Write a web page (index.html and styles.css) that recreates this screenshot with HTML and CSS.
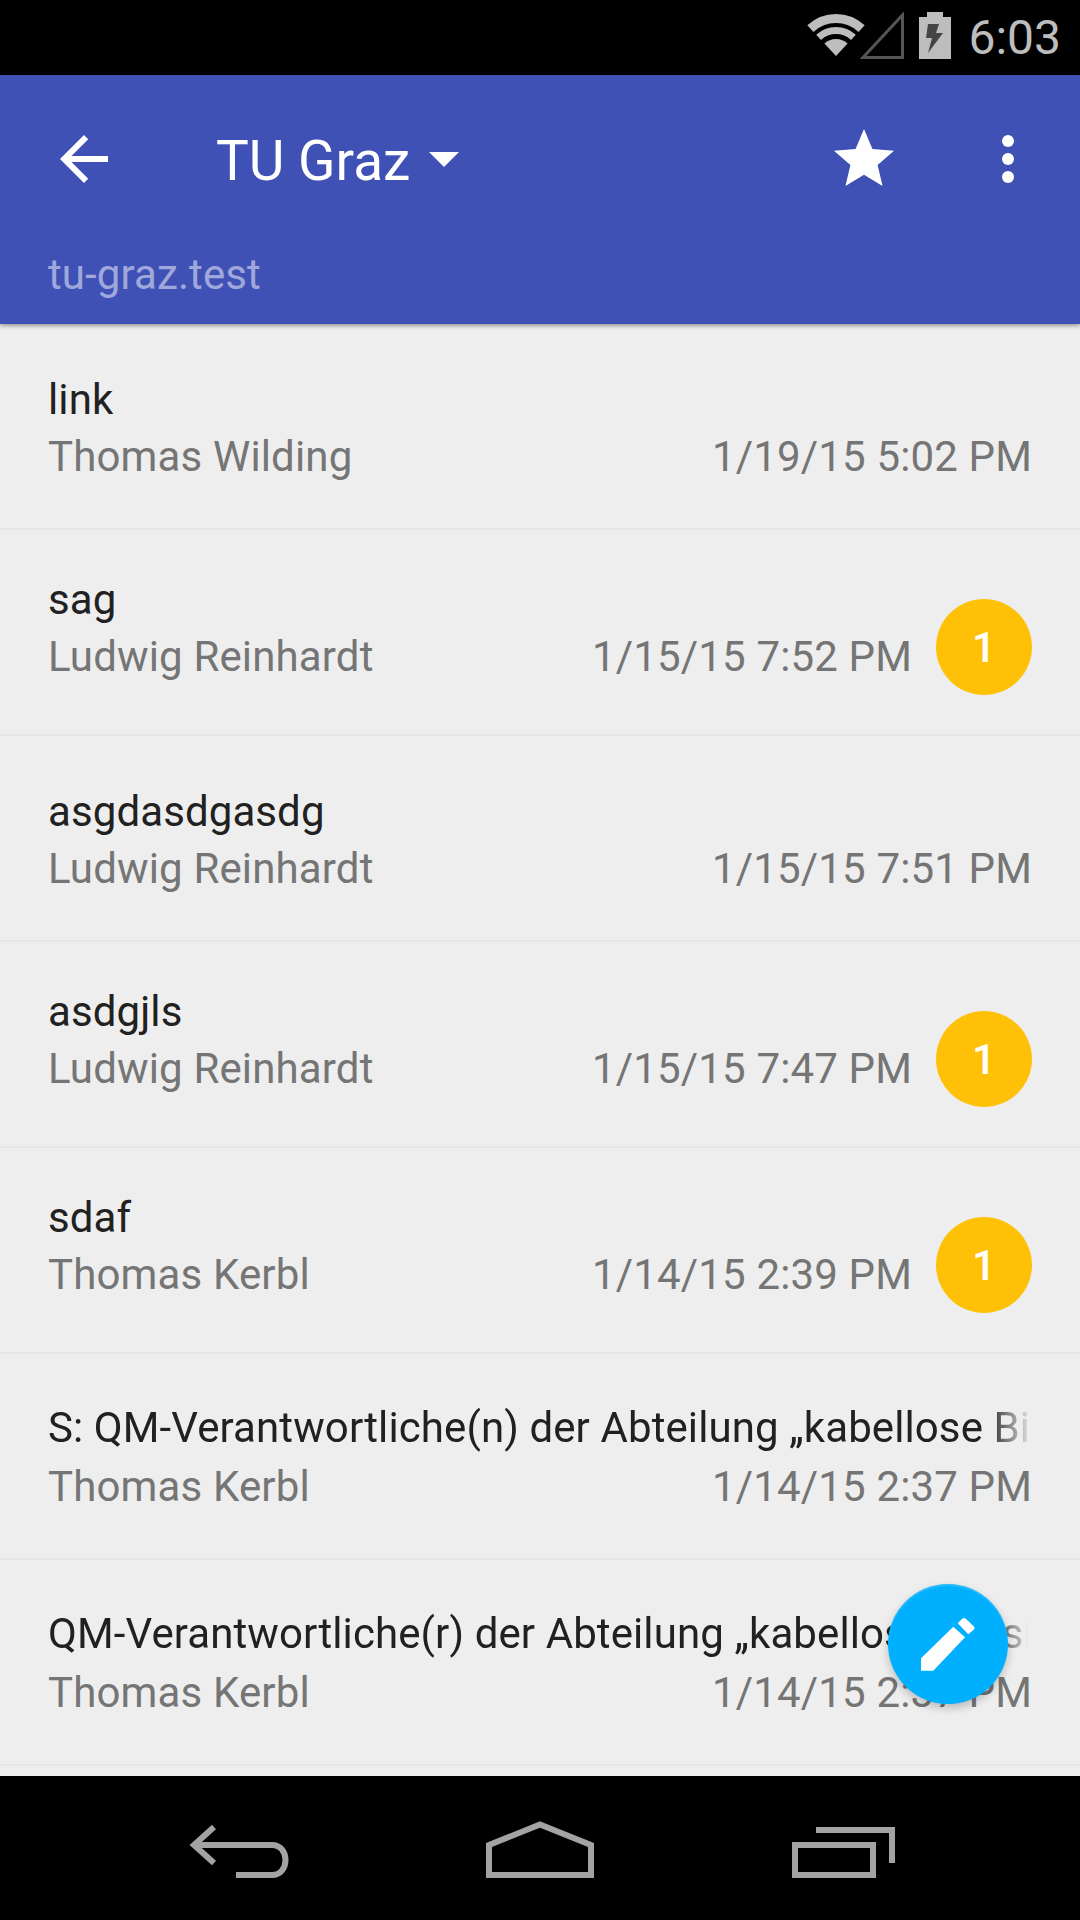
FILE: index.html
```html
<!DOCTYPE html>
<html lang="en">
<head>
<meta charset="utf-8">
<title>TU Graz</title>
<link rel="stylesheet" href="styles.css">
</head>
<body>
<div class="screen">
  <header class="status">
    <svg class="wifi" width="60" height="44" viewBox="0 0 60 44"><path class="wifi-arc outer" d="M4.4 14.6A37.5 37.5 0 0 1 55.6 14.6"/><path class="wifi-arc middle" d="M12.6 23.4A25.5 25.5 0 0 1 47.4 23.4"/><path class="wifi-core" d="M30 42L18.4 29.6A17 17 0 0 1 41.6 29.6Z"/></svg>
    <svg class="signal" width="44" height="47" viewBox="0 0 44 47"><path d="M42.5 3V45.500H3Z"/></svg>
    <svg class="battery" width="32" height="47" viewBox="0 0 32 47"><path class="battery-body" d="M8 0H24V5H32V47H0V5H8Z"/><path class="battery-bolt" d="M20 12H9L7 26H13L9 41L24 21H17Z"/></svg>
    <span class="clock">6:03</span>
  </header>

  <section class="toolbar">
    <div class="toolbar-main">
      <svg class="icon back" width="72" height="72" viewBox="0 0 24 24"><path d="M20 11H7.830l5.590-5.590L12 4l-8 8 8 8 1.410-1.410L7.830 13H20v-2z"/></svg>
      <h1 class="toolbar-title">TU Graz</h1>
      <span class="caret"></span>
      <svg class="icon star" width="72" height="72" viewBox="0 0 24 24"><path d="M12 17.270L18.180 21l-1.640-7.030L22 9.240l-7.190-.610L12 2 9.190 8.630 2 9.240l5.460 4.730L5.820 21z"/></svg>
      <svg class="icon more" width="72" height="72" viewBox="0 0 72 72"><circle cx="36" cy="18" r="6"/><circle cx="36" cy="36" r="6"/><circle cx="36" cy="54" r="6"/></svg>
    </div>
    <div class="toolbar-sub">tu-graz.test</div>
  </section>

  <main class="list">
    <article class="row row-first">
      <div class="row-text">
        <div class="subject">link</div>
        <div class="meta"><span>Thomas Wilding</span><span>1/19/15 5:02 PM</span></div>
      </div>
    </article>
    <article class="row row-badged">
      <div class="row-text">
        <div class="subject">sag</div>
        <div class="meta"><span>Ludwig Reinhardt</span><span>1/15/15 7:52 PM</span></div>
      </div>
      <div class="badge">1</div>
    </article>
    <article class="row">
      <div class="row-text">
        <div class="subject">asgdasdgasdg</div>
        <div class="meta"><span>Ludwig Reinhardt</span><span>1/15/15 7:51 PM</span></div>
      </div>
    </article>
    <article class="row row-badged">
      <div class="row-text">
        <div class="subject">asdgjls</div>
        <div class="meta"><span>Ludwig Reinhardt</span><span>1/15/15 7:47 PM</span></div>
      </div>
      <div class="badge">1</div>
    </article>
    <article class="row row-badged">
      <div class="row-text">
        <div class="subject">sdaf</div>
        <div class="meta"><span>Thomas Kerbl</span><span>1/14/15 2:39 PM</span></div>
      </div>
      <div class="badge">1</div>
    </article>
    <article class="row">
      <div class="row-text">
        <div class="subject subject-fade">S: QM-Verantwortliche(n) der Abteilung „kabellose Bi</div>
        <div class="meta"><span>Thomas Kerbl</span><span>1/14/15 2:37 PM</span></div>
      </div>
    </article>
    <article class="row">
      <div class="row-text">
        <div class="subject subject-fade">QM-Verantwortliche(r) der Abteilung „kabellose Bersi</div>
        <div class="meta"><span>Thomas Kerbl</span><span>1/14/15 2:37 PM</span></div>
      </div>
    </article>
    <button class="fab" type="button" aria-label="Compose">
      <svg width="72" height="72" viewBox="0 0 72 72"><path d="M9 50.300L41.300 18.700L53 29.300L21.300 62.700H9Z"/><path d="M45.700 15.300L50 11Q52 9 54 11L61.500 18Q63.500 20 61.500 22L56.300 26.300Z"/></svg>
    </button>
  </main>

  <footer class="nav">
    <svg class="nav-icon" width="120" height="70" viewBox="0 0 120 70"><path class="nav-stroke nav-back" d="M35 11L15 29L35 47M15 29H93C111 29 111 59 93 59H57"/></svg>
    <svg class="nav-icon" width="120" height="70" viewBox="0 0 120 70"><path class="nav-stroke" d="M60 8.500L111 29V59H9V29Z"/></svg>
    <svg class="nav-icon" width="120" height="70" viewBox="0 0 120 70"><path class="nav-stroke" d="M14 29H92V59H14Z"/><path class="nav-stroke" d="M35 14H111V47"/></svg>
  </footer>
</div>
</body>
</html>
```

FILE: styles.css
```css
* { box-sizing: border-box; }
html, body { margin: 0; padding: 0; }
body { font-family: Roboto, "Noto Sans", sans-serif; background: #000; }

.screen { width: 1080px; height: 1920px; display: flex; flex-direction: column; overflow: hidden; }

.status { height: 75px; background: #000; display: flex; align-items: flex-start; padding-right: 19px; justify-content: flex-end; flex: none; }
.wifi { margin-top: 14px; }
.wifi-arc { fill: none; stroke: #bdbdbd; }
.wifi-arc.outer { stroke-width: 9; }
.wifi-arc.middle { stroke-width: 7; }
.wifi-core { fill: #bdbdbd; }
.signal { margin: 12px 0 0 -6px; }
.signal path { fill: none; stroke: #555; stroke-width: 3; }
.battery { margin: 12px 0 0 15px; }
.battery-body { fill: #bdbdbd; }
.battery-bolt { fill: #444; }
.clock { margin: 8px 0 0 17px; font-size: 48px; line-height: 60px; color: #bdbdbd; }

.toolbar { height: 249px; background: #3f51b5; flex: none; position: relative; z-index: 2; box-shadow: 0 2px 4px rgba(0,0,0,.35); padding-top: 48px; }
.toolbar-main { display: flex; align-items: center; height: 72px; padding-left: 48px; }
.icon { fill: #fff; flex: none; }
.toolbar-title { margin: 4px 0 0 96px; font-size: 55px; font-weight: 400; line-height: 72px; color: #fff; }
.caret { width: 0; height: 0; margin-left: 19px; border-left: 15px solid transparent; border-right: 15px solid transparent; border-top: 15px solid #fff; }
.star { margin-left: auto; }
.more { margin: 0 36px 0 72px; }
.toolbar-sub { margin: 56px 0 0 48px; font-size: 42px; line-height: 48px; letter-spacing: .1px; color: #9fa8da; }

.list { flex: 1; min-height: 0; background: #eee; position: relative; }
.row { height: 206px; border-bottom: 2px solid #e6e6e6; padding: 47px 48px 0; display: flex; align-items: flex-start; gap: 24px; }
.row-first { padding-top: 47px; }
.row-badged { padding-top: 41px; }
.row-text { flex: 1; min-width: 0; }
.subject { font-size: 42px; line-height: 57px; letter-spacing: .1px; color: #212121; white-space: nowrap; overflow: hidden; }
.subject-fade { -webkit-mask-image: linear-gradient(to left, rgba(0,0,0,.12) 0, #000 40px); mask-image: linear-gradient(to left, rgba(0,0,0,.12) 0, #000 40px); width: 979px; margin: -2px 0 2px; }
.meta { display: flex; justify-content: space-between; font-size: 42px; line-height: 57px; letter-spacing: .15px; color: #757575; white-space: nowrap; }
.badge { width: 96px; height: 96px; margin-top: 28px; border-radius: 50%; background: #ffc107; color: #fff; font-size: 42px; font-weight: 500; display: flex; align-items: center; justify-content: center; flex: none; }

.fab { position: absolute; left: 888px; top: 1260px; width: 120px; height: 120px; padding: 0; border: 0; border-radius: 50%; background: #00b0ff; box-shadow: 0 4px 8px rgba(0,0,0,.22), inset 0 2px 1px rgba(255,255,255,.15); display: flex; align-items: center; justify-content: center; }
.fab svg { fill: #fff; }

.nav { height: 144px; background: #000; flex: none; display: flex; align-items: flex-start; gap: 181px; padding: 40px 0 0 179px; }
.nav-icon { flex: none; fill: none; }
.nav-stroke { fill: none; stroke: #a3a3a3; stroke-width: 6; }
```
